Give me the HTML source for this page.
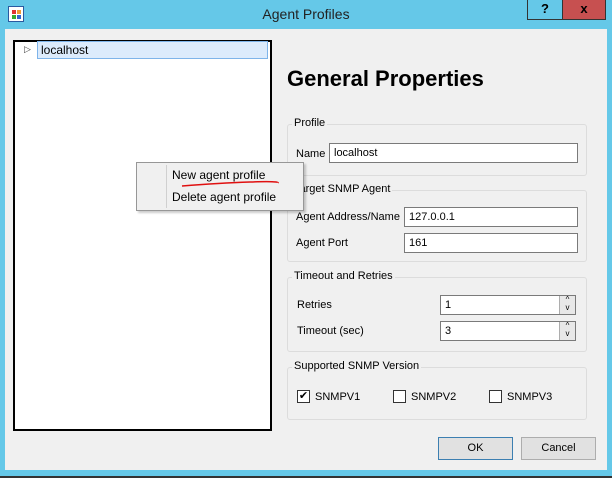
<!DOCTYPE html><html><head><style>
*{box-sizing:border-box;margin:0;padding:0}
body{width:612px;height:478px;background:#65c8e8;font-family:"Liberation Sans",sans-serif;font-size:11px;color:#000;position:relative;overflow:hidden}
.a{position:absolute}
.g{position:absolute;border:1px solid #dcdcdc;border-radius:3px}
.gl{position:absolute;background:#f0f0f0;padding:0 2px;font-size:11px}
.in{position:absolute;background:#fff;border:1px solid #7a7a7a;padding:3px 0 0 4px;font-size:11px}
.sp{position:absolute;right:0;top:0;width:16px;height:100%;border-left:1px solid #adadad;background:#e8e8e8;font-size:8px;line-height:8px;text-align:center}
.cb{position:absolute;width:13px;height:13px;border:1px solid #333;background:#fff}
.btn{position:absolute;background:#e1e1e1;border:1px solid #adadad;text-align:center;line-height:21px;font-size:11px}
</style></head><body>
<div class="a" style="left:8px;top:6px;width:16px;height:16px;background:#fff;border:1px solid #2a5aa0"><div class="a" style="left:3px;top:3px;width:4px;height:4px;background:#d33"></div><div class="a" style="left:8px;top:3px;width:4px;height:4px;background:#e93"></div><div class="a" style="left:3px;top:8px;width:4px;height:4px;background:#3a3"></div><div class="a" style="left:8px;top:8px;width:4px;height:4px;background:#36c"></div></div>
<div class="a" style="left:0;top:6px;width:612px;text-align:center;font-size:14px;color:#222">Agent Profiles</div>
<div class="a" style="left:527px;top:0;width:36px;height:20px;border:1px solid #333;border-top:0;background:#65c8e8;text-align:center;font-weight:bold;font-size:13px;line-height:18px">?</div>
<div class="a" style="left:562px;top:0;width:44px;height:20px;border:1px solid #333;border-top:0;background:#c75050;text-align:center;font-weight:bold;font-size:13px;line-height:18px">x</div>
<div class="a" style="left:5px;top:29px;width:602px;height:441px;background:#f0f0f0"></div>
<div class="a" style="left:0;top:476px;width:612px;height:2px;background:#333"></div>
<div class="a" style="left:13px;top:40px;width:259px;height:391px;background:#fff;border:2px solid #000"></div>
<div class="a" style="left:24px;top:44px;font-size:9px;color:#444">&#9655;</div>
<div class="a" style="left:37px;top:41px;width:231px;height:18px;background:#dcebfc;border:1px solid #7eb4ea;padding:1px 0 0 3px;font-size:12px">localhost</div>
<div class="a" style="left:287px;top:66px;font-size:22px;font-weight:bold">General Properties</div>
<div class="g" style="left:287px;top:124px;width:300px;height:52px"></div><div class="gl" style="left:292px;top:117px">Profile</div>
<div class="a" style="left:296px;top:148px">Name</div><div class="in" style="left:329px;top:143px;width:249px;height:20px">localhost</div>
<div class="g" style="left:287px;top:190px;width:300px;height:72px"></div><div class="gl" style="left:292px;top:183px">Target SNMP Agent</div>
<div class="a" style="left:296px;top:211px">Agent Address/Name</div><div class="in" style="left:404px;top:207px;width:174px;height:20px">127.0.0.1</div>
<div class="a" style="left:296px;top:237px">Agent Port</div><div class="in" style="left:404px;top:233px;width:174px;height:20px">161</div>
<div class="g" style="left:287px;top:277px;width:300px;height:75px"></div><div class="gl" style="left:292px;top:270px">Timeout and Retries</div>
<div class="a" style="left:297px;top:299px">Retries</div><div class="in" style="left:440px;top:295px;width:136px;height:20px">1<div class="sp">^<br>v</div></div>
<div class="a" style="left:297px;top:325px">Timeout (sec)</div><div class="in" style="left:440px;top:321px;width:136px;height:20px">3<div class="sp">^<br>v</div></div>
<div class="g" style="left:287px;top:367px;width:300px;height:53px"></div><div class="gl" style="left:292px;top:360px">Supported SNMP Version</div>
<div class="cb" style="left:297px;top:390px;font-size:11px;line-height:11px;text-align:center">&#10004;</div><div class="a" style="left:315px;top:391px">SNMPV1</div>
<div class="cb" style="left:393px;top:390px"></div><div class="a" style="left:411px;top:391px">SNMPV2</div>
<div class="cb" style="left:489px;top:390px"></div><div class="a" style="left:507px;top:391px">SNMPV3</div>
<div class="btn" style="left:438px;top:437px;width:75px;height:23px;border-color:#3c7fb1">OK</div>
<div class="btn" style="left:521px;top:437px;width:75px;height:23px">Cancel</div>
<div class="a" style="left:136px;top:162px;width:168px;height:49px;background:#f0f0f0;border:1px solid #979797;box-shadow:2px 2px 2px rgba(0,0,0,.2)"></div>
<div class="a" style="left:166px;top:165px;width:1px;height:43px;background:#d0d0d0"></div>
<div class="a" style="left:172px;top:168px;font-size:12px">New agent profile</div>
<div class="a" style="left:172px;top:190px;font-size:12px">Delete agent profile</div>
<svg class="a" style="left:180px;top:180px" width="100" height="10"><path d="M2 6 Q40 3 70 2 T98 3" stroke="#e01010" stroke-width="1.5" fill="none"/></svg>
</body></html>
